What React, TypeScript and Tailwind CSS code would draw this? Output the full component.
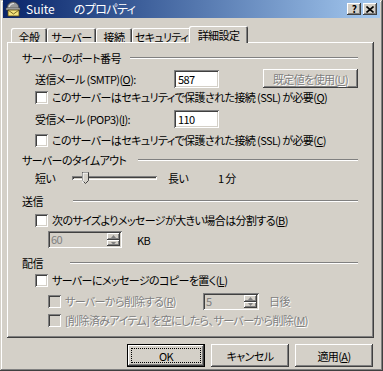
import type { ReactNode } from "react"

// Win2000 classic look: 3D edges are inset box-shadows
const raised =
  "shadow-[inset_-1px_-1px_#404040,inset_1px_1px_#ffffff,inset_-2px_-2px_#808080,inset_2px_2px_#d4d0c8]"
const sunken =
  "shadow-[inset_1px_1px_#808080,inset_-1px_-1px_#ffffff,inset_2px_2px_#404040,inset_-2px_-2px_#d4d0c8]"
const grayText = "text-[#808080] [text-shadow:1px_1px_0_#ffffff]"

function Check({ disabled }: { disabled?: boolean }) {
  return (
    <span
      className={`w-[13px] h-[13px] shrink-0 ${disabled ? "bg-[#d4d0c8]" : "bg-white"} ${sunken}`}
    />
  )
}

function CheckRow({ children, disabled, indent }: { children: ReactNode; disabled?: boolean; indent?: boolean }) {
  return (
    <div className={`flex items-center h-[16px] ${indent ? "ml-[13px]" : ""}`}>
      <Check disabled={disabled} />
      <span className={`ml-[4px] whitespace-nowrap ${disabled ? grayText : ""}`}>{children}</span>
    </div>
  )
}

function Header({ label, w, className }: { label: string; w: string; className: string }) {
  return (
    <div className={`flex items-center h-[16px] -ml-[13px] ${className}`}>
      <span className={`${w} shrink-0 whitespace-nowrap`}>{label}</span>
      <span className="flex-1 h-0 border-t border-b border-t-[#808080] border-b-white" />
    </div>
  )
}

function Arrow({ up }: { up?: boolean }) {
  return (
    <svg width="5" height="3" viewBox="0 0 5 3">
      <path d={up ? "M2.5 0 L5 3 L0 3 Z" : "M0 0 L5 0 L2.5 3 Z"} fill="#808080" />
    </svg>
  )
}

function Spin({ value, w }: { value: string; w: string }) {
  return (
    <div className={`${w} h-[17px] flex bg-[#d4d0c8] p-[2px] ${sunken}`}>
      <span className="flex-1 pl-[1px] leading-[13px] text-[#808080]">{value}</span>
      <div className="w-[13px] flex flex-col">
        <span className={`h-[7px] flex items-center justify-center ${raised}`}>
          <Arrow up />
        </span>
        <span className={`h-[6px] flex items-center justify-center ${raised}`}>
          <Arrow />
        </span>
      </div>
    </div>
  )
}

function Field({ value }: { value: string }) {
  return (
    <div className={`w-[45px] h-[18px] bg-white pl-[4px] pt-[1px] leading-[16px] ${sunken}`}>{value}</div>
  )
}

function Tab({ label, w }: { label: string; w: string }) {
  return (
    <div
      className={`${w} h-[14px] flex items-center justify-center whitespace-nowrap rounded-t-[2px] shadow-[inset_1px_1px_#ffffff,inset_-1px_0_#404040,inset_-2px_0_#808080]`}
    >
      <span className="mt-[3px]">{label}</span>
    </div>
  )
}

function OeIcon() {
  return (
    <svg width="16" height="16" viewBox="0 0 16 16">
      <path d="M2 8 C2 3 5 1 8 1 C11 1 14 3 14 8 Z" fill="#9a9a9a" stroke="#404040" strokeWidth="0.8" />
      <path d="M4 6 C5 3.5 7 2.5 9 2.5" stroke="#e8e8e8" strokeWidth="1.2" fill="none" />
      <rect x="1" y="7" width="14" height="2" fill="#c0c0c0" stroke="#404040" strokeWidth="0.6" />
      <rect x="3" y="9" width="11" height="6" fill="#f4e27a" stroke="#5a4a10" strokeWidth="0.8" />
      <path d="M3 9 L8.5 13 L14 9" fill="none" stroke="#5a4a10" strokeWidth="0.8" />
    </svg>
  )
}

function CapButton({ children }: { children: ReactNode }) {
  return (
    <span className={`w-[14px] h-[12px] bg-[#d4d0c8] flex items-center justify-center ${raised}`}>{children}</span>
  )
}

function DlgButton({ children, primary }: { children: ReactNode; primary?: boolean }) {
  if (primary) {
    return (
      <div className="w-[78px] h-[23px] border border-black">
        <div className={`w-full h-full flex items-center justify-center p-[3px] ${raised}`}>
          <div className="w-full h-full border border-dotted border-black flex items-center justify-center">
            {children}
          </div>
        </div>
      </div>
    )
  }
  return <div className={`w-[78px] h-[23px] flex items-center justify-center ${raised}`}>{children}</div>
}

export default function App() {
  return (
    <div
      className={`w-[383px] h-[371px] bg-[#d4d0c8] px-[3px] flex flex-col text-[11px] leading-[16px] tracking-[-0.6px] text-black font-['Noto_Sans_CJK_JP',sans-serif] [font-feature-settings:'palt'] shadow-[inset_-1px_-1px_#404040,inset_1px_1px_#d4d0c8,inset_-2px_-2px_#808080,inset_2px_2px_#ffffff]`}
    >
      {/* title bar */}
      <div className="h-[18px] flex items-center bg-linear-to-r from-[#0a246a] to-[#a6caf0] pl-[2px] pr-[3px]">
        <OeIcon />
        <span className="ml-[5px] text-white text-[12px] tracking-normal">Suite</span>
        <span className="ml-[19px] text-white text-[12px]">のプロパティ</span>
        <div className="ml-auto flex gap-[2px]">
          <CapButton>
            <span className="text-[10px] leading-[10px] font-bold">?</span>
          </CapButton>
          <CapButton>
            <svg width="8" height="7" viewBox="0 0 8 7">
              <path d="M0.5 0.5 L7.5 6.5 M7.5 0.5 L0.5 6.5" stroke="#000" strokeWidth="1.6" />
            </svg>
          </CapButton>
        </div>
      </div>

      {/* tabs */}
      <div className="mt-[8px] h-[16px] flex items-end pl-[8px]">
        <Tab label="全般" w="w-[36px]" />
        <Tab label="サーバー" w="w-[49px]" />
        <Tab label="接続" w="w-[36px]" />
        <Tab label="セキュリティ" w="w-[59px]" />
        <div className="relative z-10 w-[59px] h-[17px] -mx-[2px] -mb-[1px] bg-[#d4d0c8] flex items-center justify-center whitespace-nowrap rounded-t-[2px] shadow-[inset_1px_1px_#ffffff,inset_-1px_0_#404040,inset_-2px_0_#808080]">
          <span className="mt-[1px]">詳細設定</span>
        </div>
      </div>

      {/* panel */}
      <div className={`ml-[4px] w-[367px] h-[296px] pl-[28px] pr-[16px] flex flex-col ${raised}`}>
        <Header label="サーバーのポート番号" w="w-[108px]" className="mt-[8px]" />

        <div className="mt-[3px] h-[19px] flex items-center">
          <span className="w-[139px] whitespace-nowrap">
            送信メール (SMTP)(<u>O</u>):
          </span>
          <Field value="587" />
          <div className={`ml-[44px] w-[95px] h-[19px] flex items-center justify-center ${raised} ${grayText}`}>
            既定値を使用(<u>U</u>)
          </div>
        </div>

        <div className="mt-[1px]">
          <CheckRow>
            このサーバーはセキュリティで保護された接続 (SSL) が必要(<u>Q</u>)
          </CheckRow>
        </div>

        <div className="mt-[4px] h-[19px] flex items-center">
          <span className="w-[139px] whitespace-nowrap">
            受信メール (POP3)(<u>I</u>):
          </span>
          <Field value="110" />
        </div>

        <div className="mt-[4px]">
          <CheckRow>
            このサーバーはセキュリティで保護された接続 (SSL) が必要(<u>C</u>)
          </CheckRow>
        </div>

        <Header label="サーバーのタイムアウト" w="w-[116px]" className="mt-[4px]" />

        <div className="mt-[2px] h-[16px] flex items-center">
          <span className="w-[37px]">短い</span>
          <div className="relative w-[85px] h-[16px] flex items-center">
            <span className={`w-full h-[4px] bg-[#d4d0c8] ${sunken}`} />
            <svg className="absolute left-[10px] top-[2px]" width="7" height="12" viewBox="0 0 7 12">
              <path d="M0.5 0.5 H6.5 V8.5 L3.5 11.5 L0.5 8.5 Z" fill="#d4d0c8" stroke="#404040" />
              <path d="M1 11 V1 H6" fill="none" stroke="#ffffff" />
            </svg>
          </div>
          <span className="ml-[11px] w-[50px]">長い</span>
          <span>1 分</span>
        </div>

        <Header label="送信" w="w-[51px]" className="mt-[7px]" />

        <div className="mt-[3px]">
          <CheckRow>
            次のサイズよりメッセージが大きい場合は分割する(<u>B</u>)
          </CheckRow>
        </div>

        <div className="mt-[3px] ml-[13px] h-[17px] flex items-center">
          <Spin value="60" w="w-[74px]" />
          <span className="ml-[15px]">KB</span>
        </div>

        <Header label="配信" w="w-[48px]" className="mt-[7px]" />

        <div className="mt-[1px]">
          <CheckRow>
            サーバーにメッセージのコピーを置く(<u>L</u>)
          </CheckRow>
        </div>

        <div className="mt-[4px] ml-[13px] h-[18px] flex items-center">
          <Check disabled />
          <span className={`ml-[4px] w-[138px] whitespace-nowrap ${grayText}`}>
            サーバーから削除する(<u>R</u>)
          </span>
          <Spin value="5" w="w-[56px]" />
          <span className={`ml-[10px] ${grayText}`}>日後</span>
        </div>

        <div className="mt-[2px]">
          <CheckRow disabled indent>
            [削除済みアイテム] を空にしたら、サーバーから削除(<u>M</u>)
          </CheckRow>
        </div>
      </div>

      {/* dialog buttons */}
      <div className="mt-[6px] flex justify-end gap-[6px] pr-[7px]">
        <DlgButton primary>OK</DlgButton>
        <DlgButton>キャンセル</DlgButton>
        <DlgButton>
          適用(<u>A</u>)
        </DlgButton>
      </div>
    </div>
  )
}
